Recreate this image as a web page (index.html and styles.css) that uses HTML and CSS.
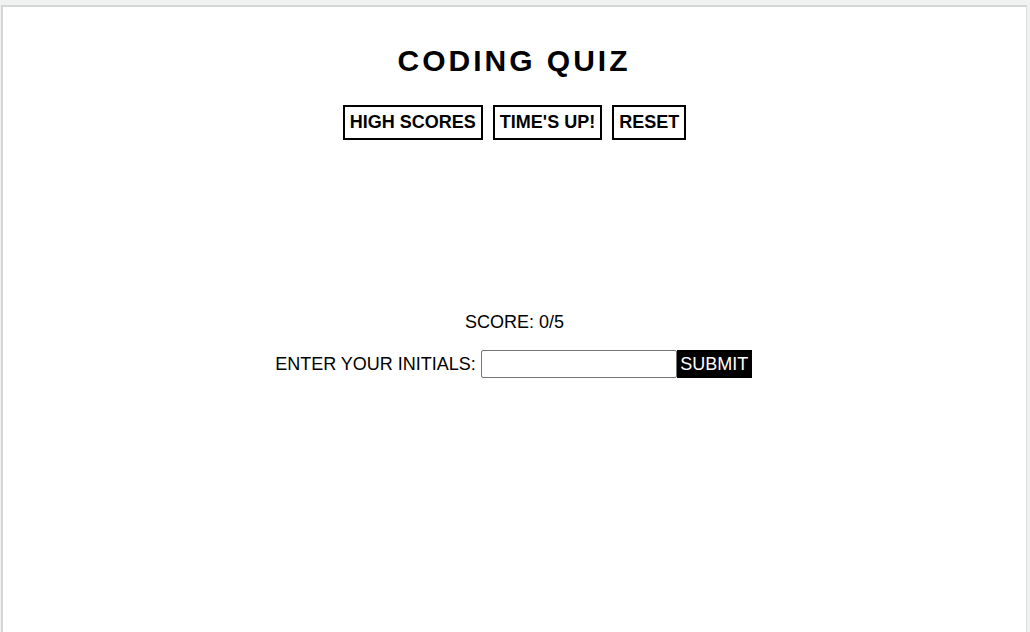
FILE: index.html
```html
<!DOCTYPE html>
<html>
<head>
<meta charset="utf-8">
<link rel="stylesheet" href="styles.css">
</head>
<body>
<div class="page">
  <h1 class="title">CODING QUIZ</h1>
  <div class="nav">
    <button class="nav-btn">HIGH SCORES</button>
    <button class="nav-btn">TIME'S UP!</button>
    <button class="nav-btn">RESET</button>
  </div>
  <div class="result">
    <p class="score">SCORE: 0/5</p>
    <form class="initials">
      <label class="initials-label">ENTER YOUR INITIALS:</label>
      <input class="initials-input" type="text">
      <button class="submit" type="button">SUBMIT</button>
    </form>
  </div>
</div>
</body>
</html>
```
FILE: styles.css
```css
html, body {
  margin: 0;
  padding: 0;
  background: #f0f1f1;
  font-family: "Liberation Sans", Arial, sans-serif;
  color: #000;
}
.page {
  margin: 5px 0 0 1px;
  width: 1023px;
  height: 640px;
  background: #fff;
  border-top: 2px solid #d6d6d6;
  border-left: 2px solid #d6d6d6;
  border-right: 1px solid #dcdcdc;
  display: flex;
  flex-direction: column;
  align-items: center;
}
.title {
  margin: 36px 0 0;
  font-size: 30px;
  line-height: 35px;
  font-weight: bold;
  letter-spacing: 3px;
  padding-right: 1px;
}
.nav {
  margin-top: 27px;
  display: flex;
  gap: 10px;
}
.nav-btn {
  background: #fff;
  border: 2px solid #000;
  font-family: "Liberation Sans", Arial, sans-serif;
  font-size: 18px;
  font-weight: bold;
  padding: 5px 5px;
  line-height: 21px;
  color: #000;
}
.result {
  margin-top: 172px;
  display: flex;
  flex-direction: column;
  align-items: center;
}
.score {
  margin: 0;
  font-size: 18px;
  line-height: 21px;
}
.initials {
  margin-top: 17px;
  display: flex;
  align-items: center;
  padding-right: 2px;
}
.initials-label {
  font-size: 18px;
  margin-right: 5px;
}
.initials-input {
  width: 196px;
  height: 28px;
  box-sizing: border-box;
  border: 1px solid #767676;
  border-radius: 2px;
  margin: 0;
  padding: 0 4px;
}
.submit {
  width: 75px;
  height: 28px;
  background: #000;
  color: #fff;
  border: none;
  margin: 0;
  padding: 0;
  font-family: "Liberation Sans", Arial, sans-serif;
  font-size: 18px;
}
```
